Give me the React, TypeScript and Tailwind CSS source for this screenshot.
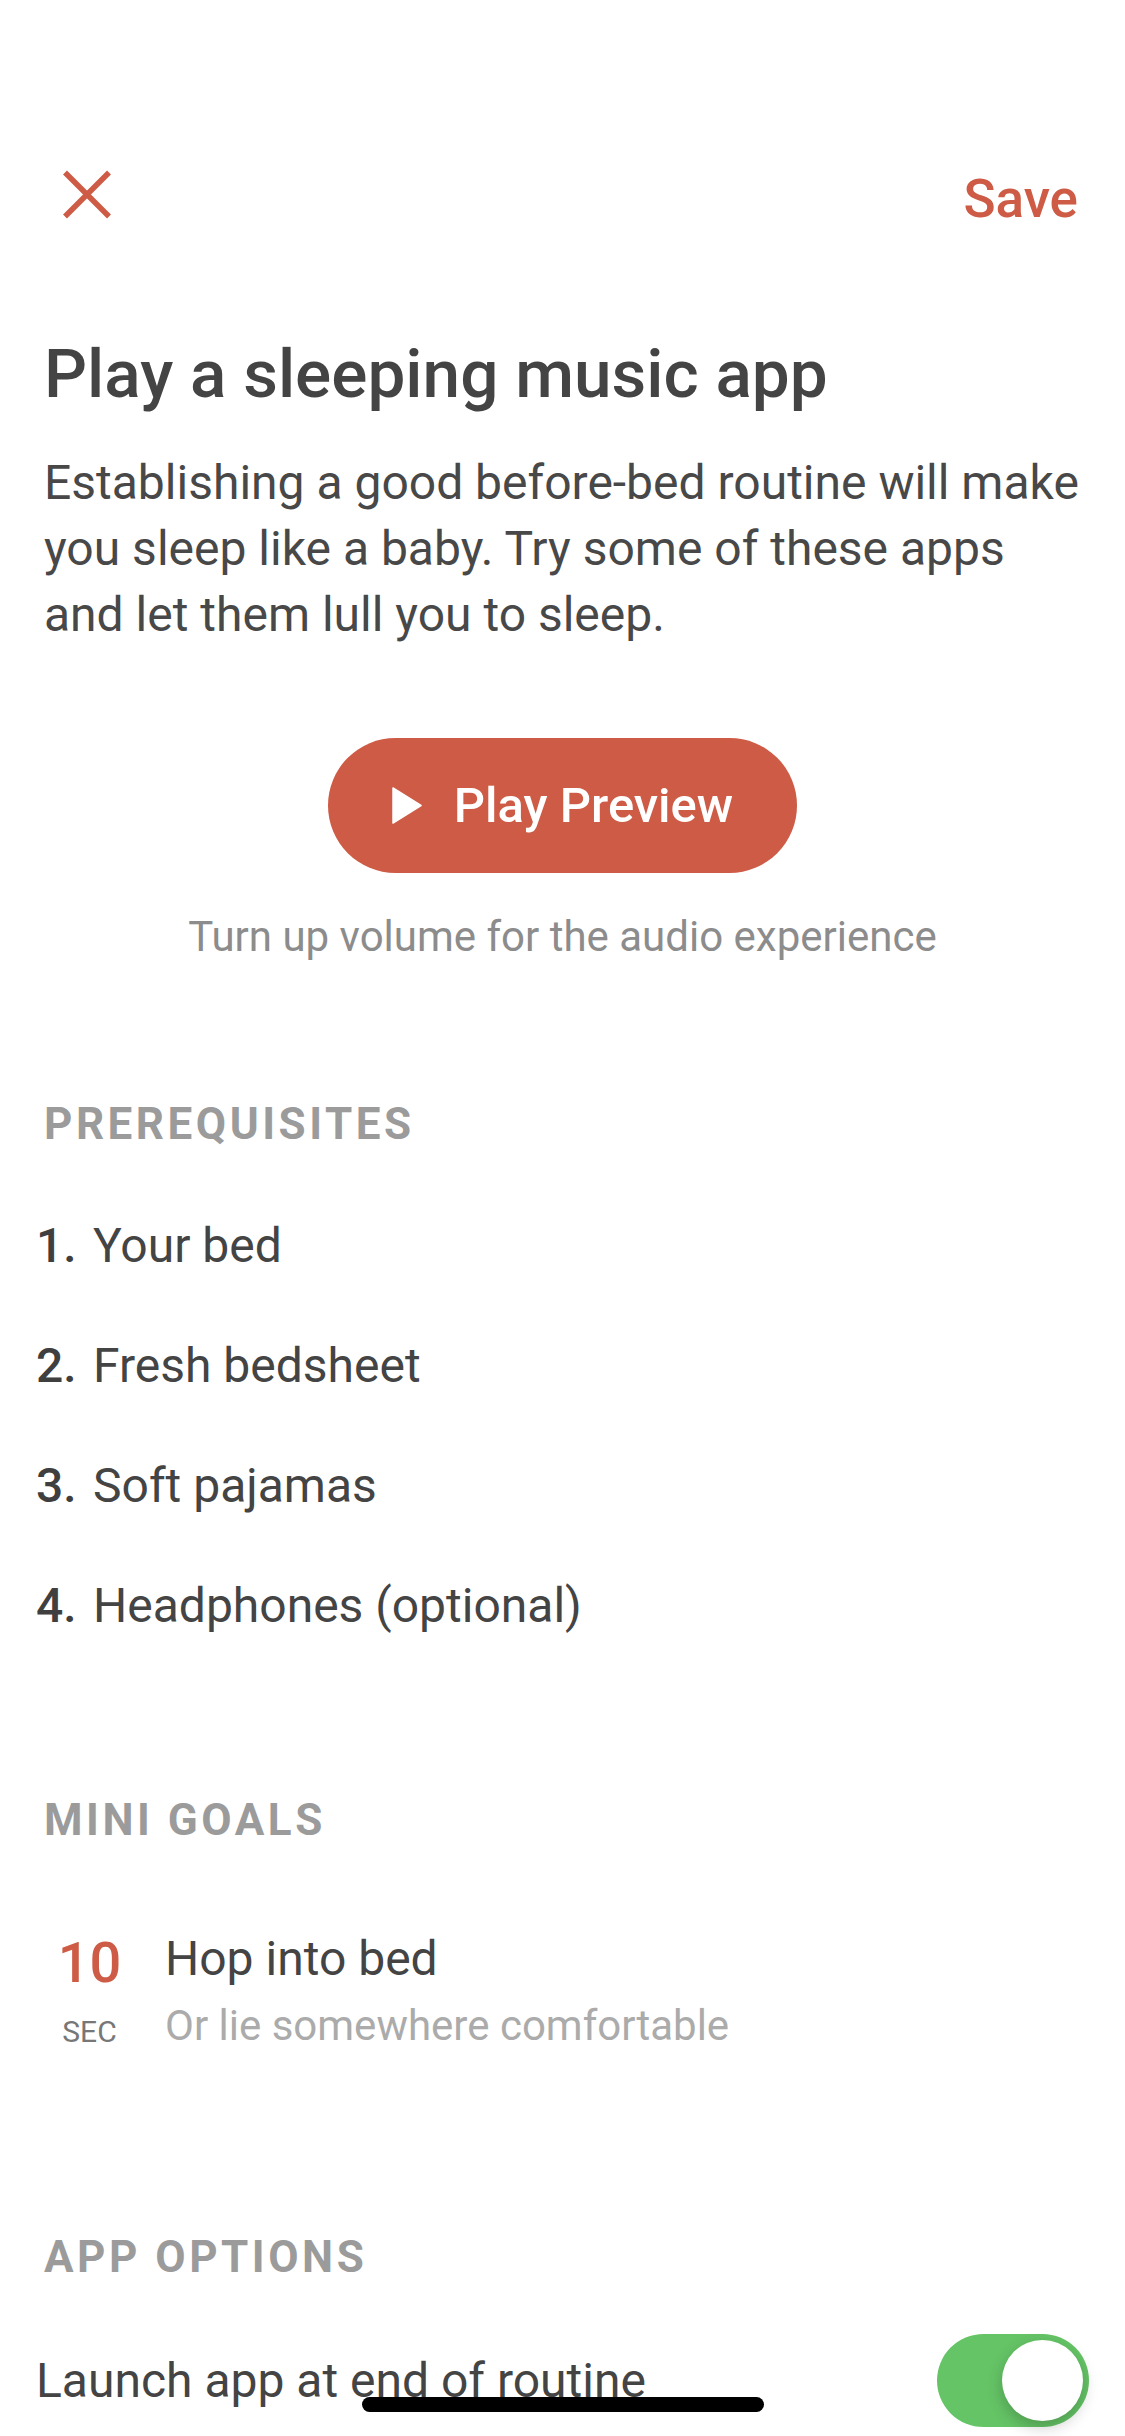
import { useState } from 'react';

const prerequisites = ['Your bed', 'Fresh bedsheet', 'Soft pajamas', 'Headphones (optional)'];

function CloseIcon() {
  return (
    <svg width="50" height="49" viewBox="0 0 50 49" fill="none">
      <path d="M3 2.5 L47 46.5 M47 2.5 L3 46.5" stroke="#CD5B45" strokeWidth="5.5" />
    </svg>
  );
}

function PlayIcon() {
  return (
    <svg width="30" height="37" viewBox="0 0 30 37" fill="white">
      <path d="M1 1 L29 18.5 L1 36 Z" stroke="white" strokeWidth="1.5" strokeLinejoin="round" />
    </svg>
  );
}

function SectionHeader({ children }: { children: string }) {
  return (
    <h2 className="px-[44px] text-[44px] leading-[50px] font-bold tracking-[0.08em] text-[#9b9b9b] uppercase">
      {children}
    </h2>
  );
}

export default function App() {
  const [launchApp, setLaunchApp] = useState(true);

  return (
    <div
      className="relative h-[2436px] w-[1125px] overflow-hidden bg-white text-[#444444]"
      style={{ fontFamily: 'Roboto, "Noto Sans", sans-serif' }}
    >
      {/* header */}
      <div className="flex items-start justify-between pt-[169px] pl-[62px] pr-[47px]">
        <button className="mt-px">
          <CloseIcon />
        </button>
        <button className="text-[53px] leading-[60px] font-medium text-[#CD5B45]">Save</button>
      </div>

      <h1 className="mt-[105px] px-[44px] text-[67.5px] leading-[80px] font-medium text-[#444444]">
        Play a sleeping music app
      </h1>
      <p className="mt-[36px] pl-[44px] pr-[30px] text-[48px] leading-[66px] text-[#484848]">
        Establishing a good before-bed routine will make you sleep like a baby. Try some of these apps and let them lull
        you to sleep.
      </p>

      <div className="mt-[90px] flex justify-center">
        <button className="flex h-[135px] w-[469px] items-center justify-center gap-[32px] rounded-full bg-[#CD5B45]">
          <PlayIcon />
          <span className="text-[49px] leading-[60px] font-medium text-white">Play Preview</span>
        </button>
      </div>
      <p className="mt-[40px] text-center text-[42px] leading-[48px] text-[#8c8c8c]">
        Turn up volume for the audio experience
      </p>

      <div className="mt-[138px]">
        <SectionHeader>Prerequisites</SectionHeader>
        <ol className="mt-[37px] pl-[36px]">
          {prerequisites.map((item, i) => (
            <li key={item} className="flex h-[120px] items-center text-[48px] leading-[120px]">
              <span className="w-[57px] font-medium text-[#3f3f3f]">{i + 1}.</span>
              <span className="text-[#444444]">{item}</span>
            </li>
          ))}
        </ol>
      </div>

      <div className="mt-[129px]">
        <SectionHeader>Mini Goals</SectionHeader>
        <div className="mt-[86px] flex pl-[44px]">
          <div className="flex w-[91px] flex-col items-center">
            <span className="text-[56px] leading-[64px] font-medium text-[#CD5B45]">10</span>
            <span className="mt-[19px] text-[30px] leading-[36px] text-[#777777]">SEC</span>
          </div>
          <div className="ml-[30px] flex flex-col">
            <span className="text-[48px] leading-[56px] text-[#444444]">Hop into bed</span>
            <span className="mt-[15px] text-[42px] leading-[48px] text-[#ababab]">Or lie somewhere comfortable</span>
          </div>
        </div>
      </div>

      <div className="mt-[182px]">
        <SectionHeader>App Options</SectionHeader>
        <div className="mt-[52px] flex h-[93px] items-center justify-between pl-[36px] pr-[36px]">
          <span className="text-[48px] leading-[93px] text-[#444444]">Launch app at end of routine</span>
          <button
            onClick={() => setLaunchApp(!launchApp)}
            className={`flex h-[93px] w-[152px] items-center rounded-full px-[6px] ${
              launchApp ? 'justify-end bg-[#65C466]' : 'justify-start bg-[#e5e5ea]'
            }`}
          >
            <span className="h-[81px] w-[81px] rounded-full bg-white shadow-[0_6px_16px_rgba(0,0,0,0.22)]" />
          </button>
        </div>
      </div>

      {/* home indicator */}
      <div className="absolute bottom-[24px] left-1/2 h-[15px] w-[402px] -translate-x-1/2 rounded-full bg-black" />
    </div>
  );
}
